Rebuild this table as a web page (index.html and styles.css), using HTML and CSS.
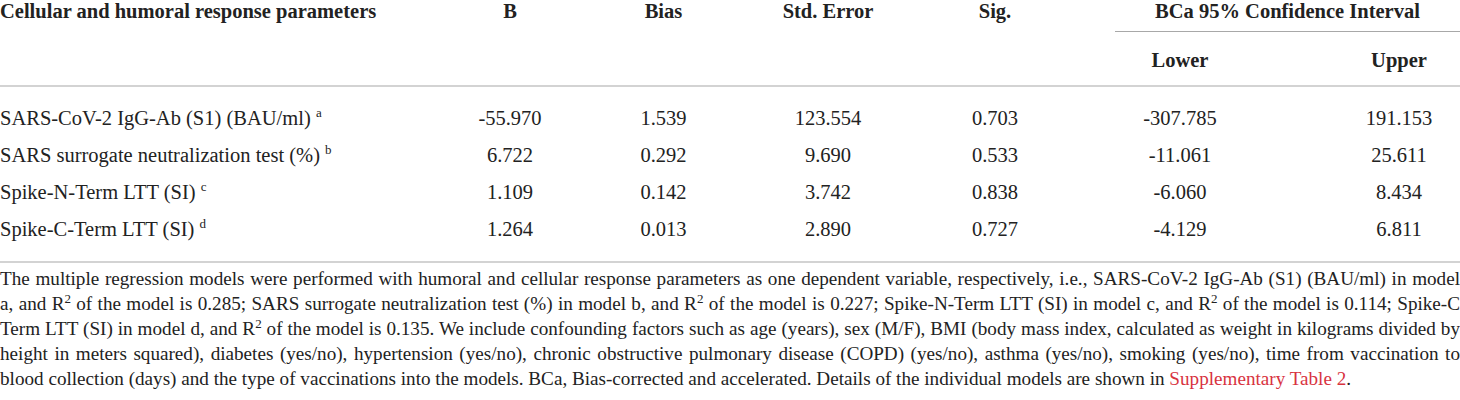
FILE: index.html
```html
<!DOCTYPE html>
<html lang="en">
<head>
  <meta charset="UTF-8">
  <meta name="viewport" content="width=device-width, initial-scale=1.0">
  <title>Bootstrap regression results</title>
  <link rel="stylesheet" href="styles.css">
</head>
<body>
  <table class="results">
    <colgroup>
      <col class="col-param">
      <col class="col-b">
      <col class="col-bias">
      <col class="col-err">
      <col class="col-sig">
      <col class="col-lower">
      <col class="col-upper">
    </colgroup>
    <thead>
      <tr class="head-top">
        <th rowspan="2" class="param">Cellular and humoral response parameters</th>
        <th rowspan="2">B</th>
        <th rowspan="2">Bias</th>
        <th rowspan="2">Std. Error</th>
        <th rowspan="2" class="sig">Sig.</th>
        <th colspan="2" class="ci"><div class="ci-title">BCa 95% Confidence Interval</div></th>
      </tr>
      <tr class="head-sub">
        <th>Lower</th>
        <th class="upper">Upper</th>
      </tr>
    </thead>
    <tbody>
      <tr>
        <td class="param">SARS-CoV-2 IgG-Ab (S1) (BAU/ml) <sup>a</sup></td>
        <td>-55.970</td>
        <td>1.539</td>
        <td>123.554</td>
        <td class="sig">0.703</td>
        <td>-307.785</td>
        <td class="upper">191.153</td>
      </tr>
      <tr>
        <td class="param">SARS surrogate neutralization test (%) <sup>b</sup></td>
        <td>6.722</td>
        <td>0.292</td>
        <td>9.690</td>
        <td class="sig">0.533</td>
        <td>-11.061</td>
        <td class="upper">25.611</td>
      </tr>
      <tr>
        <td class="param">Spike-N-Term LTT (SI) <sup>c</sup></td>
        <td>1.109</td>
        <td>0.142</td>
        <td>3.742</td>
        <td class="sig">0.838</td>
        <td>-6.060</td>
        <td class="upper">8.434</td>
      </tr>
      <tr>
        <td class="param">Spike-C-Term LTT (SI) <sup>d</sup></td>
        <td>1.264</td>
        <td>0.013</td>
        <td>2.890</td>
        <td class="sig">0.727</td>
        <td>-4.129</td>
        <td class="upper">6.811</td>
      </tr>
    </tbody>
  </table>

  <p class="note">The multiple regression models were performed with humoral and cellular response parameters as one dependent variable, respectively, i.e., SARS-CoV-2 IgG-Ab (S1) (BAU/ml) in model a,&nbsp;and R<sup>2</sup> of the model is 0.285; SARS surrogate neutralization test (%) in model b, and R<sup>2</sup> of the model is 0.227; Spike-N-Term LTT (SI) in model c, and R<sup>2</sup> of the model is 0.114; Spike-C Term LTT (SI) in model d, and R<sup>2</sup> of the model is 0.135. We include confounding factors such as age (years), sex (M/F), BMI (body mass index, calculated as weight in kilograms divided by height in meters squared), diabetes (yes/no), hypertension (yes/no), chronic obstructive pulmonary disease (COPD) (yes/no), asthma (yes/no), smoking (yes/no), time from vaccination to blood collection (days) and the type of vaccinations into the models. BCa, Bias-corrected and accelerated. Details of the individual models are shown in <a href="#" class="ref">Supplementary Table 2</a>.</p>
</body>
</html>
```

FILE: styles.css
```css
body {
  margin: 0;
  font-family: "Liberation Serif", "Times New Roman", serif;
  font-size: 20.5px;
  color: #222;
  background: #fff;
}

.results {
  width: 1460px;
  border-collapse: collapse;
  table-layout: fixed;
}

.col-param { width: 433px; }
.col-b { width: 154px; }
.col-bias { width: 153px; }
.col-err { width: 176px; }
.col-sig { width: 158px; }
.col-lower { width: 212px; }
.col-upper { width: 174px; }

th, td {
  padding: 0;
  line-height: 23px;
  text-align: center;
  font-weight: normal;
}

th {
  font-weight: bold;
  vertical-align: top;
}

.results .param {
  text-align: left;
}

.results .upper {
  padding-left: 52px;
}

.head-top th {
  padding-bottom: 9px;
}

.ci {
  padding-bottom: 0 !important;
}

.ci-title {
  margin-left: 41px;
  padding-bottom: 8px;
  border-bottom: 1px solid #a8a8a8;
}

.head-sub th {
  padding-top: 17px;
  padding-bottom: 13px;
}

thead {
  border-bottom: 2px solid #d3d3d3;
}

tbody {
  border-bottom: 2px solid #d3d3d3;
}

td {
  padding-top: 7px;
  padding-bottom: 7px;
}

tbody tr:first-child td {
  padding-top: 20px;
}

tbody tr:last-child td {
  padding-bottom: 20px;
}

sup {
  font-size: 13px;
  line-height: 0;
}

.note {
  margin: 3px 0 0;
  font-size: 19.15px;
  line-height: 25px;
  text-align: justify;
}

.ref {
  color: #d8333f;
  text-decoration: none;
}
```
